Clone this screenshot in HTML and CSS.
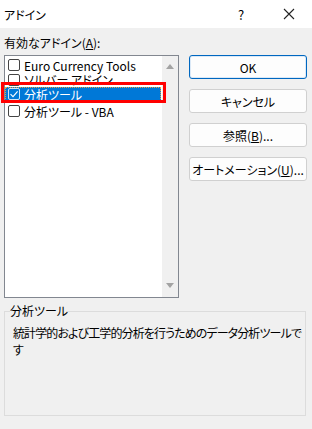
FILE: index.html
```html
<!DOCTYPE html>
<html lang="ja">
<head>
    <meta charset="UTF-8">
    <title>アドイン</title>
    <link rel="stylesheet" href="styles.css">
</head>
<body>
    <div class="titlebar">
        <span class="title">アドイン</span>
        <span class="help">?</span>
        <span class="close">
            <svg width="12" height="12" viewBox="0 0 12 12"><path d="M1 1 L11 11 M11 1 L1 11" stroke="#222" stroke-width="1.1" fill="none"/></svg>
        </span>
    </div>

    <div class="main">
        <div class="list-label">有効なアドイン(<u>A</u>):</div>

        <div class="row">
            <div class="listbox">
                <div class="items">
                    <div class="item">
                        <span class="check"></span>
                        <span>Euro Currency Tools</span>
                    </div>
                    <div class="item squeezed">
                        <span class="check"></span>
                        <span>ソルバー アドイン</span>
                    </div>
                    <div class="item selected">
                        <span class="check checked">
                            <svg width="10" height="10" viewBox="0 0 10 10"><path d="M1.5 5.2 L4 7.6 L8.6 2.4" stroke="#fff" stroke-width="1.1" fill="none"/></svg>
                        </span>
                        <span>分析ツール</span>
                    </div>
                    <div class="item">
                        <span class="check"></span>
                        <span>分析ツール - VBA</span>
                    </div>
                </div>
                <div class="scrollbar">
                    <span class="arrow up"></span>
                    <span class="arrow down"></span>
                </div>
                <div class="highlight-box"></div>
            </div>

            <div class="buttons">
                <button class="default">OK</button>
                <button>キャンセル</button>
                <button>参照(<u>B</u>)...</button>
                <button>オートメーション(<u>U</u>)...</button>
            </div>
        </div>

        <fieldset class="group">
            <legend>分析ツール</legend>
            <p>統計学的および工学的分析を行うためのデータ分析ツールです</p>
        </fieldset>
    </div>
</body>
</html>
```

FILE: styles.css
```css
body {
    margin: 0;
    width: 312px;
    height: 429px;
    background: #f0f0f0;
    font-family: "Noto Sans CJK JP", "Noto Sans", sans-serif;
    font-size: 12px;
    color: #000;
    font-feature-settings: "palt";
    overflow: hidden;
}
.titlebar {
    height: 28px;
    background: #fff;
    display: flex;
    align-items: center;
}
.title {
    padding-left: 4px;
    flex: 1;
}
.help {
    width: 46px;
    text-align: center;
    font-size: 13px;
    margin-right: 2px;
}
.close {
    width: 46px;
    display: flex;
    justify-content: center;
}
.main {
    padding: 0 5px 0 4px;
}
.list-label {
    padding-top: 7px;
    line-height: 16px;
    margin-bottom: 4px;
}
.row {
    display: flex;
    gap: 10px;
}
.listbox {
    position: relative;
    width: 173px;
    height: 241px;
    border: 1px solid #828790;
    background: #fff;
    display: flex;
}
.items {
    flex: 1;
    padding: 1px 1px 0 0;
    overflow: hidden;
}
.item {
    display: flex;
    align-items: center;
    gap: 4px;
    height: 16px;
    padding-left: 3px;
    white-space: nowrap;
}
.item.squeezed {
    height: 14px;
    align-items: flex-start;
    overflow: hidden;
}
.item.squeezed .check {
    margin-top: 1px;
}
.item.squeezed span:last-child {
    margin-top: -2px;
}
.item.selected {
    background: #0078d7;
    color: #fff;
    height: 14px;
    margin: 0 0 2px 0;
    outline: 1px dotted #e8a040;
    outline-offset: -1px;
}
.check {
    width: 10px;
    height: 10px;
    border: 1px solid #444;
    border-radius: 2px;
    background: #fff;
    flex: none;
    display: flex;
    align-items: center;
    justify-content: center;
}
.check.checked {
    background: transparent;
    border-color: #cfe4f7;
}
.scrollbar {
    width: 16px;
    background: #f0f0f0;
    display: flex;
    flex-direction: column;
    justify-content: space-between;
    align-items: center;
    padding: 8px 0 9px;
}
.arrow {
    width: 0;
    height: 0;
    border-left: 4px solid transparent;
    border-right: 4px solid transparent;
}
.arrow.up {
    border-bottom: 5px solid #a3a3a3;
}
.arrow.down {
    border-top: 5px solid #a3a3a3;
}
.highlight-box {
    position: absolute;
    left: -4px;
    top: 26px;
    width: 159px;
    height: 15px;
    border: 3px solid #ff0000;
}
.buttons {
    display: flex;
    flex-direction: column;
    gap: 10px;
    width: 118px;
}
button {
    height: 24px;
    font-family: inherit;
    font-size: 12px;
    font-feature-settings: "palt";
    background: #fdfdfd;
    border: 1px solid #d0d0d0;
    border-radius: 3px;
    color: #000;
    padding: 0;
}
button.default {
    border: 1px solid #0067c0;
    box-shadow: inset 0 0 0 1px #dbe9f7;
}
.group {
    margin: 5px 1px 0 0;
    height: 106px;
    border: 1px solid #dcdcdc;
    padding: 5px 0 0 8px;
}
.group legend {
    padding: 0;
    margin-left: -3px;
    line-height: 16px;
}
.group p {
    margin: 0;
    line-height: 17px;
    letter-spacing: -0.9px;
}
```
